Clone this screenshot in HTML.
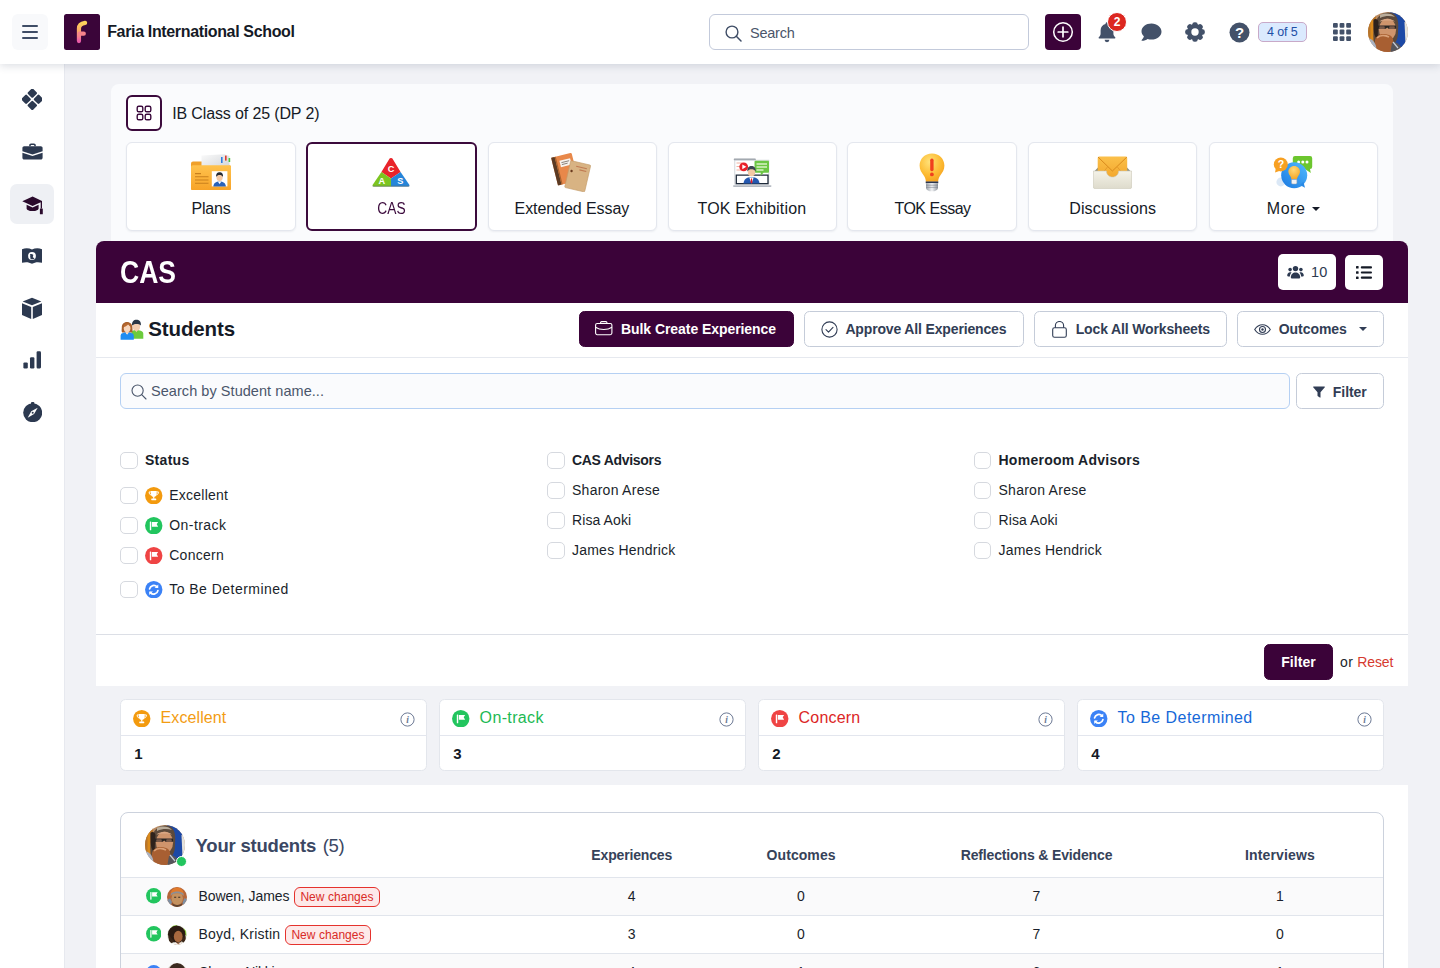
<!DOCTYPE html>
<html lang="en">
<head>
<meta charset="utf-8">
<title>CAS - IB Class of 25 (DP 2) - Faria International School</title>
<style>
*{box-sizing:border-box;margin:0;padding:0}
html,body{width:1440px;height:968px;overflow:hidden}
body{background:#f1f2f6;font-family:"Liberation Sans",Arial,sans-serif;color:#1a1f2b;font-size:14px;position:relative}
.abs{position:absolute}
svg{display:block}
.tx{position:absolute;white-space:nowrap}
#top{position:absolute;left:0;top:0;width:1440px;height:64px;background:#fff;box-shadow:0 2px 8px rgba(40,50,80,.16);z-index:20}
#burger{position:absolute;left:12px;top:14px;width:36px;height:36px;border-radius:6px;background:#f8f9fb}
#burger i{position:absolute;left:9.800px;width:16.400px;height:1.700px;background:#3f4d66;border-radius:1px}
#logo{position:absolute;left:64px;top:14px;width:36px;height:36px;border-radius:2.500px;background:#3a0539}
#gsearch{position:absolute;left:709px;top:14px;width:319.500px;height:35.500px;border:1px solid #c3cadb;border-radius:6px;background:#fff}
#plus{position:absolute;left:1045px;top:14px;width:36px;height:36px;border-radius:4px;background:#3b0339}
#badge2{position:absolute;left:1106.600px;top:11.700px;width:20.500px;height:20.500px;border-radius:50%;background:#dc2720;border:1.500px solid #fff}
#of5{position:absolute;left:1258px;top:22px;width:48.500px;height:20px;border:1px solid #c8a9c8;border-radius:5px;background:#dbeafe}
.avatar{border-radius:50%;overflow:hidden;position:absolute}
#side{position:absolute;left:0;top:64px;width:65px;height:904px;background:#fff;border-right:1px solid #e7e9ef;z-index:10}
#side .act{position:absolute;left:10px;top:120px;width:44px;height:40px;border-radius:7px;background:#eef0f4}
#side svg{position:absolute}
#panel{position:absolute;left:111px;top:84px;width:1282px;height:170px;background:#fafbfd;border-radius:8px}
#cicon{position:absolute;left:15px;top:11px;width:36px;height:36px;border:2px solid #3b0a3c;border-radius:6px;background:#fff}
.tab{position:absolute;top:58px;width:169.500px;height:88.500px;border:1px solid #e4e7ee;border-radius:6px;background:#fff;box-shadow:0 1px 2px rgba(40,50,80,.07)}
.tab.on{border:2px solid #3b0a3c;box-shadow:none}
.tab svg{position:absolute}
#banner{position:absolute;left:96px;top:241px;width:1312px;height:62px;background:#3b0339;border-radius:8px 8px 0 0}
.wbtn{position:absolute;top:13px;height:36px;border-radius:5px;background:#fff}
#sec2{position:absolute;left:96px;top:303px;width:1312px;height:383px;background:#fff}
#sec2 .hr1{position:absolute;left:0;top:54px;width:100%;height:1px;background:#e6e9ef}
#sec2 .hr2{position:absolute;left:0;top:330.500px;width:100%;height:1px;background:#dcdfe6}
.btn{position:absolute;top:8.300px;height:35.500px;border:1px solid #c5ccd9;border-radius:5.500px;background:#fff}
.btn.pri{background:#3b0339;border-color:#3b0339}
.btn svg{position:absolute}
#sinput{position:absolute;left:24px;top:70px;width:1170px;height:35.700px;border:1px solid #b5d0f3;border-radius:6px;background:#fafbfd}
.cb{position:absolute;width:17.500px;height:17px;border:1px solid #d6d9df;border-radius:5px;background:#fff}
.card{position:absolute;top:699px;width:306.500px;height:72px;border:1px solid #e3e6ec;border-radius:5.500px;background:#fff}
.card .ln{position:absolute;left:0;right:0;top:35px;height:1px;background:#e3e6ee}
#sec3{position:absolute;left:96px;top:785px;width:1312px;height:190px;background:#fff}
#tbl{position:absolute;left:24px;top:27px;width:1264px;height:200px;border:1px solid #ccd2dd;border-radius:8px;background:#fff;overflow:hidden}
.row{position:absolute;left:0;width:100%;height:38px;border-top:1px solid #e1e5ec}
.row.odd{background:#fafafb}
.tag{position:absolute;height:19.500px;width:86px;border:1px solid #e5322d;border-radius:6px;background:#fde9e9}
.av20{position:absolute;width:20.400px;height:20.400px;border-radius:50%;overflow:hidden}
</style>
</head>
<body>
<!-- top header -->
<div id="top">
<div id="burger"><i style="top:11.300px"></i><i style="top:17.300px"></i><i style="top:23.300px"></i></div>
<div id="logo"><svg width="36" height="36" viewBox="0 0 36 36"><defs><linearGradient id="lg" x1="0" y1="0" x2="0" y2="1"><stop offset="0" stop-color="#fdd25a"/><stop offset=".45" stop-color="#f9a868"/><stop offset=".8" stop-color="#f47a92"/><stop offset="1" stop-color="#e85aa8"/></linearGradient></defs><path d="M14.950 27.100V14.600C14.950 11.200 17.600 9.300 21.100 8.800" fill="none" stroke="url(#lg)" stroke-width="4.200" stroke-linecap="round"/><path d="M15.600 19.650H19.800" fill="none" stroke="#f6848c" stroke-width="4.200" stroke-linecap="round"/></svg></div>
<div class="tx" id="t1" style="left:107.20px;top:22.46px;font-size:16px;line-height:20px;color:#151a26;font-weight:700;letter-spacing:-0.349px;">Faria International School</div>
<div id="gsearch"><svg class="abs" style="left:14.500px;top:9.500px" width="17" height="17" viewBox="0 0 17 17"><circle cx="7" cy="7" r="5.900" fill="none" stroke="#3f4d66" stroke-width="1.400"/><path d="M11.300 11.300L16 16" stroke="#3f4d66" stroke-width="1.500" stroke-linecap="round"/></svg></div>
<div class="tx" id="t2" style="left:750.00px;top:22.98px;font-size:14.5px;line-height:20px;color:#4b566b;letter-spacing:-0.242px;">Search</div>
<div id="plus"><svg width="36" height="36" viewBox="0 0 36 36"><circle cx="18" cy="18" r="9.300" fill="none" stroke="#fff" stroke-width="1.500"/><path d="M18 13.200V22.800M13.200 18H22.800" stroke="#fff" stroke-width="1.700" stroke-linecap="round"/></svg></div>
<svg class="abs" style="left:1097px;top:21px" width="20" height="22" viewBox="0 0 20 22"><path d="M10 1.200c-.8 0-1.400.6-1.400 1.400v.5C5.600 3.800 3.600 6.300 3.600 9.300v3.300c0 1.200-.5 2.300-1.300 3.200l-.5.500c-.4.400-.1 1.300.6 1.300h15.200c.7 0 1-.9.600-1.300l-.5-.5c-.8-.9-1.300-2-1.300-3.200V9.300c0-3-2-5.500-5-6.200v-.5c0-.8-.6-1.400-1.400-1.400z" fill="#435169"/><path d="M7.600 18.800a2.400 2.400 0 0 0 4.800 0z" fill="#435169"/></svg>
<div id="badge2"></div>
<div class="tx" id="t3" style="left:1113.65px;top:12.04px;font-size:12px;line-height:20px;color:#fff;font-weight:700;letter-spacing:0.013px;">2</div>
<svg class="abs" style="left:1141px;top:23px" width="21" height="19" viewBox="0 0 21 19"><path d="M10.500.5C4.900.5.5 4 .5 8.300c0 1.900.9 3.700 2.400 5-.3 1.400-1.100 2.600-2.200 3.600-.3.300-.1.800.3.800 2.300 0 4.200-.8 5.600-1.800 1.200.4 2.500.6 3.900.6 5.600 0 10-3.500 10-7.800S16.100.5 10.500.5z" fill="#435169"/></svg>
<svg class="abs" style="left:1185px;top:22px" width="20" height="20" viewBox="0 0 20 20" fill="#435169"><circle cx="10" cy="10" r="7.900"/><rect x="7.300" y=".2" width="5.400" height="19.600" rx="2.300"/><rect x="7.300" y=".2" width="5.400" height="19.600" rx="2.300" transform="rotate(45 10 10)"/><rect x="7.300" y=".2" width="5.400" height="19.600" rx="2.300" transform="rotate(90 10 10)"/><rect x="7.300" y=".2" width="5.400" height="19.600" rx="2.300" transform="rotate(135 10 10)"/><circle cx="10" cy="10" r="3.700" fill="#fff"/></svg>
<svg class="abs" style="left:1229px;top:22px" width="21" height="21" viewBox="0 0 21 21"><circle cx="10.500" cy="10.500" r="10" fill="#435169"/><text x="10.500" y="15.900" text-anchor="middle" font-family="Liberation Sans,sans-serif" font-weight="700" font-size="15" fill="#fff">?</text></svg>
<div id="of5"></div>
<div class="tx" id="t4" style="left:1266.95px;top:21.97px;font-size:12.5px;line-height:20px;color:#1d4fa6;letter-spacing:-0.097px;">4 of 5</div>
<svg class="abs" style="left:1333px;top:23px" width="18" height="18" viewBox="0 0 18 18" fill="#435169"><rect x="0.0" y="0.0" width="4.800" height="4.800" rx="1"/><rect x="6.6" y="0.0" width="4.800" height="4.800" rx="1"/><rect x="13.2" y="0.0" width="4.800" height="4.800" rx="1"/><rect x="0.0" y="6.6" width="4.800" height="4.800" rx="1"/><rect x="6.6" y="6.6" width="4.800" height="4.800" rx="1"/><rect x="13.2" y="6.6" width="4.800" height="4.800" rx="1"/><rect x="0.0" y="13.2" width="4.800" height="4.800" rx="1"/><rect x="6.6" y="13.2" width="4.800" height="4.800" rx="1"/><rect x="13.2" y="13.2" width="4.800" height="4.800" rx="1"/></svg>
<div class="avatar" style="left:1368px;top:12px;width:40px;height:40px"><svg width="40" height="40" viewBox="0 0 40 40"><defs><filter id="fa" x="-5%" y="-5%" width="110%" height="110%"><feGaussianBlur stdDeviation=".7"/></filter></defs><rect width="40" height="40" fill="#b98a62"/><g filter="url(#fa)"><rect x="-2" y="-2" width="10" height="44" fill="#b8742a"/><rect x="2.500" y="8" width="2.500" height="20" fill="#d98a1e"/><path d="M22 -2H42V42H30L24 30z" fill="#1f48a6"/><path d="M36.500 10L42 8V34L37.500 32z" fill="#e4e2dc"/><path d="M6 30C4 14 8 1 20 .5 30 .5 31 9 30 20 30 30 26 34 19 34 12 34 7 34 6 30z" fill="#5c4a3a"/><path d="M12 3C16 .5 24 1 27 5 23 3.500 17 3.500 12 6z" fill="#b9ac9a"/><ellipse cx="19.500" cy="17.500" rx="8.600" ry="11" fill="#cf946c"/><path d="M11.500 9.500C14 6 24 6 27 9.500 24 8 15 8 11.500 9.500z" fill="#dba987"/><path d="M5.500 8C7 6 10 7 10.500 10 10 16 9.500 22 10 27 7 26 5 22 5.500 8z" fill="#2e211c"/><path d="M9.500 13.600H28V16.800H20.500L19.200 15.400 17.800 16.800H9.500z" fill="#2b2524"/><rect x="11.200" y="14.300" width="5.600" height="2.600" rx="1" fill="#7a5a48"/><rect x="21.200" y="14.300" width="5.600" height="2.600" rx="1" fill="#7a5a48"/><path d="M7 28C9 22 15 21 21 23 24 24 26 27 25 31 24 36 22 42 20 42H10C7 38 6 32 7 28z" fill="#a85f30"/><path d="M9 26C12 23 17 23 21 25" stroke="#d9a078" stroke-width="1.600" fill="none"/><path d="M-1 26C2 26 6 28 8 34L9 42H-1z" fill="#aab2c2"/><path d="M24 31C27 29 30 31 33 35L30 42H22z" fill="#55555c"/><path d="M25 30L30 36" stroke="#c8ccd6" stroke-width="1.200"/></g></svg></div>
</div>

<!-- sidebar -->
<div id="side">
<div class="act"></div>
<svg style="left:21.700px;top:25.300px" width="20.600" height="20.600" viewBox="0 0 22 22" fill="#2c3950"><rect x="7.100" y=".5" width="7.800" height="7.800" rx="1.300" transform="rotate(45 11 4.400)"/><rect x="7.100" y="13.700" width="7.800" height="7.800" rx="1.300" transform="rotate(45 11 17.600)"/><rect x=".5" y="7.100" width="7.800" height="7.800" rx="1.300" transform="rotate(45 4.400 11)"/><rect x="13.700" y="7.100" width="7.800" height="7.800" rx="1.300" transform="rotate(45 17.600 11)"/></svg>
<svg style="left:21.500px;top:78.800px" width="21" height="17" viewBox="0 0 21 17" fill="#2c3950"><path d="M7.200 3.200V2.200C7.200 1.200 8 .4 9 .4h3c1 0 1.800.8 1.800 1.800v1h-1.500v-.8c0-.3-.2-.5-.5-.5H9.200c-.3 0-.5.200-.5.500v.8z"/><path d="M2.200 3.200h16.600c1 0 1.800.8 1.800 1.800v3.200L10.500 11.400.4 8.200V5c0-1 .8-1.800 1.800-1.800z"/><path d="M.4 9.800l10.100 3.200 10.100-3.200v5c0 1-.8 1.800-1.800 1.800H2.200c-1 0-1.800-.8-1.800-1.800z"/></svg>
<svg style="left:21.500px;top:131.500px" width="22.500" height="19" viewBox="0 0 22.500 19" fill="#2a0a2c"><path d="M10.600.5.300 5.300l10.300 4.800 8.100-3.800v6.200h1.300V5.100z"/><path d="M4.600 8.700v3.700c0 1.400 2.700 2.700 6 2.700s6-1.300 6-2.700V8.700l-6 2.800z"/><rect x="17.900" y="12.600" width="2.900" height="5.600" rx=".5"/></svg>
<svg style="left:21px;top:183px" width="22" height="19" viewBox="0 0 22 19"><path d="M1 2.200C4.500.8 8 1 11 2.600 14 1 17.500.8 21 2.200v13.600c-3.500-1-7-.8-10 1-3-1.800-6.500-2-10-1z" fill="#2c3950"/><circle cx="11" cy="9" r="3.900" fill="#fff"/><path d="M9 7.200c1-.4 2.400-.3 3.200.6.300 1-.6 1.500-.3 2.500.4.800 1.500.3 1.500 1.200-1 1-2.800 1.200-4 .2.300-1-.5-1.600-.2-2.500.2-.8 0-1.300-.2-2z" fill="#2c3950"/></svg>
<svg style="left:21px;top:233px" width="22" height="23" viewBox="0 0 22 23" fill="#2c3950"><path d="M11 .8 20.400 4.500 11 8.300 1.600 4.500z"/><path d="M1 6.200l9.200 3.700v12L1 18.100z"/><path d="M21 6.200l-9.200 3.700v12l9.200-3.800z"/></svg>
<svg style="left:22.800px;top:287px" width="18.400" height="17.800" viewBox="0 0 20 19.400" fill="#2c3950"><rect x=".4" y="12.400" width="4.800" height="6.600" rx="1.300"/><rect x="7.600" y="6.800" width="4.800" height="12.200" rx="1.300"/><rect x="14.800" y=".4" width="4.800" height="18.600" rx="1.300"/></svg>
<svg style="left:22.500px;top:337.500px" width="19.400" height="20.400" viewBox="0 0 19.400 20.400"><rect x="8" y="0" width="3.400" height="3" rx="1" fill="#2c3950"/><circle cx="9.700" cy="10.700" r="9.500" fill="#2c3950"/><path d="M14.700 5.700 11.100 12.100 4.700 15.700 8.300 9.300z" fill="#fff"/><circle cx="9.700" cy="10.700" r="1" fill="#2c3950"/></svg>
</div>

<!-- class panel + tabs -->
<div id="panel">
<div id="cicon"><svg width="32" height="32" viewBox="0 0 32 32" fill="none" stroke="#3b0a3c" stroke-width="1.400"><rect x="9.200" y="9.200" width="5.600" height="5.600" rx="1.600"/><rect x="17.200" y="9.200" width="5.600" height="5.600" rx="1.600"/><rect x="9.200" y="17.200" width="5.600" height="5.600" rx="1.600"/><rect x="17.200" y="17.200" width="5.600" height="5.600" rx="1.600"/></svg></div>
<div class="tx" id="t5" style="left:61.20px;top:19.86px;font-size:16px;line-height:20px;color:#151a26;letter-spacing:-0.133px;">IB Class of 25 (DP 2)</div>
<div class="tab" style="left:15.4px;width:169.5px"></div>
<svg class="abs" style="left:79.8px;top:69.6px" width="40" height="36.4" viewBox="0 0 40 36.400"><defs><linearGradient id="pf" x1="0" y1="0" x2="0" y2="1"><stop offset="0" stop-color="#ffc24d"/><stop offset="1" stop-color="#f7a328"/></linearGradient><linearGradient id="pp" x1="0" y1="0" x2="1" y2="1"><stop offset="0" stop-color="#fafafa"/><stop offset="1" stop-color="#cfd2d6"/></linearGradient></defs>
<path d="M0 9.500Q0 7.500 2 7.500H14.500L17.500 11H38Q40 11 40 13V34Q40 36 38 36H2Q0 36 0 34Z" fill="#f0a02a"/>
<path d="M10.500 1.500L33 .3 38.500 2V16H10.500Z" fill="url(#pp)"/>
<rect x="30" y="3" width="1.600" height="6" fill="#2f7de0"/><rect x="34" y="1.600" width="1.600" height="5" fill="#e03a2f"/><rect x="37.600" y="4" width="1.600" height="4" fill="#4cc13a"/>
<path d="M0 13Q0 11.200 2 11.200H38Q40 11.200 40 13V34.400Q40 36.400 38 36.400H2Q0 36.400 0 34.400Z" fill="url(#pf)"/>
<path d="M4 19.600H10M4 22.800H17.500M4 26H17.500M4 29.200H17.500" stroke="#c9801c" stroke-width="1.100"/>
<rect x="20.800" y="17.200" width="15.600" height="15.200" fill="#fff"/>
<path d="M22.300 32.400c.4-3.600 2.600-5 6.300-5s5.900 1.400 6.300 5z" fill="#2a62b8"/><path d="M26.800 27.600l1.800 2.400 1.800-2.400z" fill="#fff"/>
<ellipse cx="28.600" cy="23.600" rx="3.100" ry="3.600" fill="#f3c9a6"/><path d="M25.200 23c-.4-3.400 1.400-4.800 3.400-4.800s3.800 1.400 3.400 4.800c-.8-1.600-2-2-3.400-2s-2.600.4-3.400 2z" fill="#262b33"/></svg>
<div class="tx" id="t6" style="left:80.50px;top:114.71px;font-size:16px;line-height:20px;color:#151a26;letter-spacing:-0.206px;">Plans</div>
<div class="tab on" style="left:195.0px;width:171px"></div>
<svg class="abs" style="left:261.2px;top:73.0px" width="38" height="30" viewBox="0 0 38 30"><path d="M19 1.200Q19.800.6 20.400 1.600L28.600 15 19 21.600 9.400 15 17.600 1.600Q18.200.6 19 1.200z" fill="#e8232a"/>
<path d="M9.400 15L19 21.600V29.400H2Q-.2 29.400.9 27.500z" fill="#7cc520"/>
<path d="M28.600 15L19 21.600V29.400H36Q38.200 29.400 37.100 27.500z" fill="#2585d9"/>
<path d="M.6 28.400Q0 29.900 2 29.900H36Q38 29.900 37.400 28.400z" fill="#5e6a6e" opacity=".45"/>
<text x="19" y="14.600" text-anchor="middle" font-family="Liberation Sans,sans-serif" font-weight="700" font-size="9.200" fill="#fff">C</text>
<text x="9.700" y="27.400" text-anchor="middle" font-family="Liberation Sans,sans-serif" font-weight="700" font-size="9.200" fill="#fff">A</text>
<text x="28.300" y="27.400" text-anchor="middle" font-family="Liberation Sans,sans-serif" font-weight="700" font-size="9.200" fill="#fff">S</text></svg>
<div class="tx" id="t7" style="left:263.94px;top:114.71px;font-size:16px;line-height:20px;color:#3b0a3c;transform:scaleX(0.8600);transform-origin:center center;">CAS</div>
<div class="tab" style="left:376.5px;width:169.5px"></div>
<svg class="abs" style="left:440.0px;top:68.0px" width="40" height="40" viewBox="0 0 40 40"><g transform="rotate(-14 13 17)"><rect x="3.200" y="3" width="21" height="28.500" rx="1.200" fill="#e8884a"/><rect x="3.200" y="3" width="3.600" height="28.500" fill="#5a3a24"/><rect x="6.800" y="3" width="1.200" height="28.500" fill="#a8622e"/><rect x="10.500" y="8" width="11" height="6.500" fill="#f7f3ee"/><path d="M12 10.200h8M12 12.200h6" stroke="#7a7068" stroke-width=".8"/></g>
<g transform="rotate(13 26.500 24)"><rect x="16.500" y="10.500" width="20.500" height="27.500" rx="1" fill="#d8b383"/><rect x="16.500" y="10.500" width="20.500" height="27.500" rx="1" fill="none" stroke="#c39a68" stroke-width=".6"/><path d="M23 14.800h11M27 17.600h7" stroke="#c07a52" stroke-width="1.100"/><circle cx="19.600" cy="20.500" r="1.200" fill="#6a3a1e"/></g></svg>
<div class="tx" id="t8" style="left:403.52px;top:114.71px;font-size:16px;line-height:20px;color:#151a26;letter-spacing:-0.062px;">Extended Essay</div>
<div class="tab" style="left:556.5px;width:169.5px"></div>
<svg class="abs" style="left:622.0px;top:73.5px" width="38.5" height="29.5" viewBox="0 0 38.500 29.500"><rect x=".8" y=".6" width="22" height="1.800" rx=".6" fill="#9aa0a8"/>
<rect x="1.800" y="2.200" width="34" height="24" fill="#fff" stroke="#c9cdd3" stroke-width=".8"/>
<path d="M3.500 5h6M3.500 8.500h4M3.500 12h5" stroke="#f1b0a0" stroke-width="1"/>
<path d="M3.300 17.200H35V25.600H3.300Z" fill="#fff" stroke="#1f2a3a" stroke-width="1.300"/>
<circle cx="10.700" cy="8.800" r="4.400" fill="#e8202a"/><path d="M9.300 6.400v4.800l4-2.400z" fill="#fff"/>
<path d="M21.500 3.800Q21.500 2.800 22.500 2.800H35Q36 2.800 36 3.800V13.800Q36 14.800 35 14.800H30.500L27.500 18 27.800 14.800H22.500Q21.500 14.800 21.500 13.800Z" fill="#6cc644"/>
<path d="M23.500 6h10.500M23.500 9h10.500M23.500 12h7" stroke="#d8f2c4" stroke-width="1.300"/>
<path d="M10.500 25.600c.4-4.600 3-6.400 8-6.400s7.600 1.800 8 6.400z" fill="#2458b0"/><path d="M16.300 19.400l2.200 6.200 2.200-6.200z" fill="#fff"/><path d="M18 20.400h1l.5 4-1 1.200-1-1.200z" fill="#e0202a"/>
<ellipse cx="18.500" cy="14" rx="3.700" ry="4.300" fill="#f3c9a6"/><path d="M14.400 13.600c-.5-4 1.700-5.600 4.100-5.600s4.600 1.600 4.100 5.600c-1-1.800-2.400-2.400-4.100-2.400s-3.100.6-4.100 2.400z" fill="#3a4452"/>
<rect x="0" y="27.200" width="38.500" height="1.700" rx=".8" fill="#b5bac2"/></svg>
<div class="tx" id="t9" style="left:586.52px;top:114.71px;font-size:16px;line-height:20px;color:#151a26;letter-spacing:0.166px;">TOK Exhibition</div>
<div class="tab" style="left:736.3px;width:169.5px"></div>
<svg class="abs" style="left:808.2px;top:68.6px" width="26" height="39" viewBox="0 0 26 39"><defs><radialGradient id="bg1" cx=".4" cy=".3" r=".8"><stop offset="0" stop-color="#ffe27a"/><stop offset=".55" stop-color="#fdbd35"/><stop offset="1" stop-color="#f39a18"/></radialGradient><linearGradient id="mt" x1="0" y1="0" x2="1" y2="0"><stop offset="0" stop-color="#9aa0a8"/><stop offset=".5" stop-color="#f2f3f5"/><stop offset="1" stop-color="#8e949c"/></linearGradient></defs>
<path d="M13 .5C5.800 .5 .6 6 .6 12.600c0 4.200 2 7 3.800 9.400 1.500 2 2.300 4 2.500 6.800H19.100c.2-2.800 1-4.800 2.500-6.800 1.800-2.400 3.800-5.200 3.800-9.400C25.400 6 20.200.5 13 .5z" fill="url(#bg1)"/>
<rect x="6.700" y="28.500" width="12.600" height="1.700" fill="#2a3550"/>
<path d="M7 30.200H19V35Q19 36.600 17.400 37.200L15.500 38.300H10.500L8.600 37.200Q7 36.600 7 35Z" fill="url(#mt)"/>
<path d="M7 32.200H19M7 34.400H19" stroke="#7f858e" stroke-width=".6"/>
<rect x="11.200" y="5.600" width="3.400" height="12.600" rx="1.600" fill="#f0401e"/><circle cx="12.900" cy="21.400" r="1.900" fill="#f0401e"/></svg>
<div class="tx" id="t10" style="left:783.45px;top:114.71px;font-size:16px;line-height:20px;color:#151a26;letter-spacing:-0.503px;">TOK Essay</div>
<div class="tab" style="left:916.6px;width:169.5px"></div>
<svg class="abs" style="left:982.4px;top:71.6px" width="39" height="33" viewBox="0 0 39 33"><defs><linearGradient id="ev" x1="0" y1="0" x2="0" y2="1"><stop offset="0" stop-color="#fbc04a"/><stop offset="1" stop-color="#f2a52a"/></linearGradient><linearGradient id="tr" x1="0" y1="0" x2="0" y2="1"><stop offset="0" stop-color="#f4f2e8"/><stop offset="1" stop-color="#dedbcc"/></linearGradient></defs>
<path d="M1.200 15.500L5 11.500H34L37.800 15.500V20H1.200Z" fill="#8b8f86"/>
<rect x="4.700" y=".6" width="29.500" height="23" rx="1.500" fill="url(#ev)"/>
<path d="M5 1L19.400 15 33.900 1" fill="none" stroke="#d98a1c" stroke-width="1"/><path d="M5 23L14.500 11M33.900 23L24.400 11" stroke="#e0952a" stroke-width=".8"/>
<path d="M.4 15H13.400C13.400 18.400 16 21 19.500 21S25.600 18.400 25.600 15H38.600V31Q38.600 32.600 37 32.600H2Q.4 32.600 .4 31Z" fill="url(#tr)" stroke="#c9c6b6" stroke-width=".6"/></svg>
<div class="tx" id="t11" style="left:958.20px;top:114.71px;font-size:16px;line-height:20px;color:#151a26;letter-spacing:0.149px;">Discussions</div>
<div class="tab" style="left:1097.5px;width:169.5px"></div>
<svg class="abs" style="left:1162.0px;top:71.0px" width="40" height="34" viewBox="0 0 40 34"><defs><linearGradient id="mb" x1="1" y1="0" x2="0" y2="1"><stop offset="0" stop-color="#52bbff"/><stop offset="1" stop-color="#1a78e0"/></linearGradient><radialGradient id="ml" cx=".45" cy=".3" r=".8"><stop offset="0" stop-color="#ffd878"/><stop offset="1" stop-color="#f5a21c"/></radialGradient></defs>
<circle cx="7.800" cy="27" r="4.400" fill="#dbe8f6"/>
<path d="M22 1H37Q39.200 1 39.200 3.200V11.800Q39.200 14 37 14L37.800 18 32 14H22Q19.800 14 19.800 11.800V3.200Q19.800 1 22 1z" fill="#6cc62e"/>
<circle cx="25.600" cy="7" r="1.500" fill="#fff"/><circle cx="29.800" cy="7" r="1.500" fill="#fff"/><circle cx="34" cy="7" r="1.500" fill="#fff"/>
<circle cx="21.200" cy="20.200" r="13" fill="url(#mb)"/><path d="M27 30l5 2.800-1.600-6z" fill="#2a8ae6"/>
<circle cx="7.800" cy="9.400" r="7" fill="#f7a022"/><path d="M2.800 13.500L2 17.400 7 15.800z" fill="#f7a022"/>
<text x="7.900" y="13.300" text-anchor="middle" font-family="Liberation Sans,sans-serif" font-weight="700" font-size="10.500" fill="#fff">?</text>
<path d="M21.200 11c-3.300 0-5.800 2.500-5.800 5.600 0 1.900.9 3.200 1.800 4.300.7.900 1.100 1.800 1.200 3h5.600c.1-1.200.5-2.100 1.200-3 .9-1.100 1.800-2.400 1.800-4.300 0-3.100-2.500-5.600-5.800-5.600z" fill="url(#ml)"/>
<path d="M18.500 24.400h5.400v3.400q0 1.200-1.200 1.200h-3q-1.200 0-1.200-1.200z" fill="#f1f2f4" stroke="#9aa0a8" stroke-width=".5"/></svg>
<div class="tx" id="t12" style="left:1155.80px;top:114.71px;font-size:16px;line-height:20px;color:#151a26;letter-spacing:0.537px;">More</div>
<i class="abs" style="left:1200.800px;top:123px;width:0;height:0;border-left:4px solid transparent;border-right:4px solid transparent;border-top:4.500px solid #151a26"></i>
</div>

<!-- CAS banner -->
<div id="banner">
<div class="tx" id="t13" style="left:23.60px;top:13.39px;font-size:31.5px;line-height:36px;color:#fff;font-weight:700;transform:scaleX(0.8419);transform-origin:left center;">CAS</div>
<div class="wbtn" style="left:1182px;width:58px"><svg class="abs" style="left:9px;top:11px" width="17" height="14" viewBox="0 0 17 14" fill="#2c3950"><circle cx="8.500" cy="3.600" r="2.700"/><path d="M3.800 12.600c0-3 2-5 4.700-5s4.700 2 4.700 5c0 .5-.3.800-.8.800H4.600c-.5 0-.8-.3-.8-.8z"/><circle cx="3.100" cy="4.600" r="1.800"/><circle cx="13.900" cy="4.600" r="1.800"/><path d="M.2 10.600c0-2 1.200-3.400 2.900-3.400.6 0 1.100.2 1.500.4-1 1-1.600 2.300-1.700 3.800H1c-.5 0-.8-.3-.8-.8zM16.800 10.600c0-2-1.200-3.400-2.900-3.400-.6 0-1.100.2-1.500.4 1 1 1.600 2.300 1.700 3.800H16c.5 0 .8-.3.800-.8z"/></svg></div>
<div class="tx" id="t14" style="left:1215.00px;top:21.28px;font-size:14.5px;line-height:20px;color:#2c3950;letter-spacing:0.080px;">10</div>
<div class="wbtn" style="left:1249px;width:38.300px;top:14px;height:34.500px"><svg class="abs" style="left:11px;top:10px" width="16" height="15" viewBox="0 0 16 15" fill="#151a26"><rect x="0" y="1" width="2.600" height="2.600" rx=".6"/><rect x="4.800" y="1.200" width="11.200" height="2.200" rx="1"/><rect x="0" y="6.200" width="2.600" height="2.600" rx=".6"/><rect x="4.800" y="6.400" width="11.200" height="2.200" rx="1"/><rect x="0" y="11.400" width="2.600" height="2.600" rx=".6"/><rect x="4.800" y="11.600" width="11.200" height="2.200" rx="1"/></svg></div>
</div>

<!-- students + filter -->
<div id="sec2">
<svg class="abs" style="left:24px;top:16px" width="24" height="21" viewBox="0 0 24 21"><path d="M11.500 19.800V13.600Q11.500 11.600 14 11.200L16.400 10.600 18.800 11.200Q23.300 11.800 23.300 14.600V19.800Z" fill="#6ccb3c"/><path d="M14.800 10.800l1.600 2.400 1.600-2.400z" fill="#f6c3b0"/><ellipse cx="16.400" cy="7.400" rx="3.700" ry="4.300" fill="#f3cdb0"/><path d="M12.100 6.600C11.600 2.600 13.800.8 16.400.8s4.900 1.600 4.500 5.600c-1.200-1.300-2.700-1.500-4.400-1.500s-3.200.4-4.400 1.700z" fill="#2a3646"/><path d="M7 2.900c-3.200 0-5.200 2.400-5.200 5.400 0 2.400-.6 4 .4 5.300h9.800c1-1.300.4-2.900.4-5.300 0-3-2.200-5.400-5.400-5.400z" fill="#a9602c"/><ellipse cx="7.100" cy="9.200" rx="3.300" ry="3.900" fill="#f8d6bc"/><path d="M3.800 8c1.600-.4 3.400-1.400 4.400-2.800.6 1.200 1.400 2 2.300 2.600C10.300 5.400 9 4.200 7 4.200S3.800 5.600 3.800 8z" fill="#b8692f"/><path d="M.6 20.800V16.600Q.6 14.300 3 13.900L5.200 13.300 7.100 15.600 9 13.300 11.300 13.900Q13.800 14.300 13.800 16.600V20.800Z" fill="#1f8df2"/><path d="M5.400 13.200l1.700 2.300 1.700-2.300z" fill="#f8d6bc"/></svg>
<div class="tx" id="t15" style="left:52.30px;top:13.20px;font-size:20.5px;line-height:26px;color:#151a26;font-weight:700;letter-spacing:-0.138px;">Students</div>
<div class="btn pri" style="left:483.0px;width:214.6px"><svg style="left:15.200px;top:9.200px" width="17.500" height="14.500" viewBox="0 0 17.500 14.500" fill="none" stroke="#fff" stroke-width="1.100"><rect x=".6" y="2.500" width="16.300" height="11.200" rx="1.600"/><path d="M5.600 2.500V1.600c0-.6.400-1 1-1h4.300c.6 0 1 .4 1 1v.9M.6 6.200c2.400 1.700 5 2.300 8.150 2.300s5.750-.6 8.150-2.300"/></svg></div>
<div class="tx" id="t16" style="left:525.00px;top:15.95px;font-size:14px;line-height:20px;color:#fff;font-weight:700;letter-spacing:-0.064px;">Bulk Create Experience</div>
<div class="btn" style="left:708.2px;width:219.5px"><svg style="left:15.600px;top:9.200px" width="17" height="17" viewBox="0 0 17 17" fill="none" stroke="#313d55" stroke-width="1.100"><circle cx="8.500" cy="8.500" r="7.600"/><path d="M5 8.700l2.500 2.500L12 6.400" stroke-linecap="round" stroke-linejoin="round"/></svg></div>
<div class="tx" id="t17" style="left:749.40px;top:15.95px;font-size:14px;line-height:20px;color:#313d55;font-weight:700;letter-spacing:-0.149px;">Approve All Experiences</div>
<div class="btn" style="left:938.4px;width:192.2px"><svg style="left:16.300px;top:8.500px" width="15" height="17" viewBox="0 0 15 17" fill="none" stroke="#313d55" stroke-width="1.100"><rect x=".7" y="6.800" width="13.600" height="9.400" rx="1.800"/><path d="M3.400 6.800V4.600a4.100 4.100 0 0 1 8.200 0v2.200"/></svg></div>
<div class="tx" id="t18" style="left:979.70px;top:15.95px;font-size:14px;line-height:20px;color:#313d55;font-weight:700;letter-spacing:-0.144px;">Lock All Worksheets</div>
<div class="btn" style="left:1141.3px;width:146.5px"><svg style="left:15.700px;top:12px" width="17" height="11" viewBox="0 0 17 11" fill="none" stroke="#313d55" stroke-width="1.100"><path d="M.7 5.500C2.600 2.500 5.300.7 8.500.7s5.900 1.800 7.800 4.800c-1.900 3-4.600 4.800-7.800 4.800S2.600 8.500.7 5.500z"/><circle cx="8.500" cy="5.500" r="3"/><circle cx="8.500" cy="5.500" r="1.200" fill="#313d55" stroke="none"/></svg><i style="position:absolute;left:121px;top:15px;width:0;height:0;border-left:4px solid transparent;border-right:4px solid transparent;border-top:4.500px solid #313d55"></i></div>
<div class="tx" id="t19" style="left:1182.70px;top:15.95px;font-size:14px;line-height:20px;color:#313d55;font-weight:700;letter-spacing:-0.046px;">Outcomes</div>
<div class="hr1"></div>
<div id="sinput"><svg class="abs" style="left:10px;top:10px" width="16" height="16" viewBox="0 0 16 16" fill="none" stroke="#4a566b" stroke-width="1.100"><circle cx="6.600" cy="6.600" r="5.600"/><path d="M10.700 10.700l4.300 4.300" stroke-linecap="round"/></svg></div>
<div class="tx" id="t20" style="left:55.00px;top:77.58px;font-size:14.5px;line-height:20px;color:#4a566b;letter-spacing:0.052px;">Search by Student name...</div>
<div class="btn" style="left:1200px;top:70px;width:87.800px"><svg style="left:16px;top:12px" width="12" height="12" viewBox="0 0 12 12" fill="#313d55"><path d="M.6.400h10.800c.5 0 .7.500.4.900L7.500 6.300v4.900c0 .4-.4.600-.7.400L4.900 10.200a.8.800 0 0 1-.4-.7V6.300L.2 1.300C-.1.900.1.400.6.400z"/></svg></div>
<div class="tx" id="t21" style="left:1236.80px;top:78.55px;font-size:14px;line-height:20px;color:#313d55;font-weight:700;letter-spacing:-0.056px;">Filter</div>
<div class="cb" style="left:24px;top:149px"></div>
<div class="tx" id="t22" style="left:49.00px;top:147.40px;font-size:14px;line-height:20px;color:#1a1f2b;font-weight:700;letter-spacing:0.284px;">Status</div>
<div class="cb" style="left:24px;top:184px"></div>
<svg class="abs" style="left:49px;top:183.8px" width="17.5" height="17.5" viewBox="0 0 16 16"><circle cx="8" cy="8" r="7.950" fill="#f39a0e"/><path d="M5.300 3.700h5.400v2.500c0 1.700-1.100 3-2.700 3s-2.700-1.300-2.700-3z" fill="#fff"/><path d="M5.300 4.500H3.800c0 1.700.6 2.600 1.800 2.800M10.700 4.500h1.500c0 1.700-.6 2.600-1.800 2.800" fill="none" stroke="#fff" stroke-width=".9"/><rect x="7.450" y="9" width="1.100" height="1.700" fill="#fff"/><rect x="5.700" y="10.600" width="4.600" height="1.400" rx=".4" fill="#fff"/></svg>
<div class="tx" id="t23" style="left:73.25px;top:182.40px;font-size:14px;line-height:20px;color:#1a1f2b;letter-spacing:0.243px;">Excellent</div>
<div class="cb" style="left:24px;top:214px"></div>
<svg class="abs" style="left:49px;top:213.8px" width="17.5" height="17.5" viewBox="0 0 16 16"><circle cx="8" cy="8" r="7.950" fill="#22c55e"/><rect x="4.400" y="4" width="1.300" height="8.200" rx=".5" fill="#fff"/><path d="M6.300 4.500h5.700l-1.300 2.200 1.300 2.200H6.300z" fill="#fff"/></svg>
<div class="tx" id="t24" style="left:73.25px;top:212.40px;font-size:14px;line-height:20px;color:#1a1f2b;letter-spacing:0.445px;">On-track</div>
<div class="cb" style="left:24px;top:244px"></div>
<svg class="abs" style="left:49px;top:243.8px" width="17.5" height="17.5" viewBox="0 0 16 16"><circle cx="8" cy="8" r="7.950" fill="#ef4444"/><rect x="4.400" y="4" width="1.300" height="8.200" rx=".5" fill="#fff"/><path d="M6.300 4.500h5.700l-1.300 2.200 1.300 2.200H6.300z" fill="#fff"/></svg>
<div class="tx" id="t25" style="left:73.25px;top:242.40px;font-size:14px;line-height:20px;color:#1a1f2b;letter-spacing:0.261px;">Concern</div>
<div class="cb" style="left:24px;top:278px"></div>
<svg class="abs" style="left:49px;top:277.8px" width="17.5" height="17.5" viewBox="0 0 16 16"><circle cx="8" cy="8" r="7.950" fill="#3b82f6"/><path d="M4.200 7.200A3.900 3.900 0 0 1 11 5.400" fill="none" stroke="#fff" stroke-width="1.600" stroke-linecap="round"/><path d="M12.100 3.200v3.300H8.800z" fill="#fff"/><path d="M11.800 8.800A3.900 3.900 0 0 1 5 10.600" fill="none" stroke="#fff" stroke-width="1.600" stroke-linecap="round"/><path d="M3.900 12.800V9.500h3.300z" fill="#fff"/></svg>
<div class="tx" id="t26" style="left:73.25px;top:276.05px;font-size:14px;line-height:20px;color:#1a1f2b;letter-spacing:0.465px;">To Be Determined</div>
<div class="cb" style="left:451px;top:149px"></div>
<div class="tx" id="t27" style="left:476.00px;top:147.25px;font-size:14px;line-height:20px;color:#1a1f2b;font-weight:700;letter-spacing:-0.299px;">CAS Advisors</div>
<div class="cb" style="left:451px;top:179px"></div>
<div class="tx" id="t28" style="left:476.00px;top:177.25px;font-size:14px;line-height:20px;color:#1a1f2b;letter-spacing:0.263px;">Sharon Arese</div>
<div class="cb" style="left:451px;top:209px"></div>
<div class="tx" id="t29" style="left:476.00px;top:207.25px;font-size:14px;line-height:20px;color:#1a1f2b;letter-spacing:0.099px;">Risa Aoki</div>
<div class="cb" style="left:451px;top:239px"></div>
<div class="tx" id="t30" style="left:476.00px;top:237.25px;font-size:14px;line-height:20px;color:#1a1f2b;letter-spacing:0.223px;">James Hendrick</div>
<div class="cb" style="left:877.5px;top:149px"></div>
<div class="tx" id="t31" style="left:902.50px;top:147.25px;font-size:14px;line-height:20px;color:#1a1f2b;font-weight:700;letter-spacing:0.260px;">Homeroom Advisors</div>
<div class="cb" style="left:877.5px;top:179px"></div>
<div class="tx" id="t32" style="left:902.50px;top:177.25px;font-size:14px;line-height:20px;color:#1a1f2b;letter-spacing:0.263px;">Sharon Arese</div>
<div class="cb" style="left:877.5px;top:209px"></div>
<div class="tx" id="t33" style="left:902.50px;top:207.25px;font-size:14px;line-height:20px;color:#1a1f2b;letter-spacing:0.099px;">Risa Aoki</div>
<div class="cb" style="left:877.5px;top:239px"></div>
<div class="tx" id="t34" style="left:902.50px;top:237.25px;font-size:14px;line-height:20px;color:#1a1f2b;letter-spacing:0.223px;">James Hendrick</div>
<div class="hr2"></div>
<div class="btn pri" style="left:1168px;top:341.4px;width:69px"></div>
<div class="tx" id="t35" style="left:1185.25px;top:349.15px;font-size:14px;line-height:20px;color:#fff;font-weight:700;letter-spacing:0.044px;">Filter</div>
<div class="tx" id="t36" style="left:1244.00px;top:349.15px;font-size:14px;line-height:20px;color:#1a1f2b;letter-spacing:0.423px;">or</div>
<div class="tx" id="t37" style="left:1261.30px;top:349.15px;font-size:14px;line-height:20px;color:#d63a2f;letter-spacing:-0.136px;">Reset</div>
</div>

<!-- status cards -->
<div class="card" style="left:120px"><svg class="abs" style="left:12.3px;top:9.5px" width="17.5" height="17.5" viewBox="0 0 16 16"><circle cx="8" cy="8" r="7.950" fill="#f39a0e"/><path d="M5.300 3.700h5.400v2.500c0 1.700-1.100 3-2.700 3s-2.700-1.300-2.700-3z" fill="#fff"/><path d="M5.300 4.500H3.800c0 1.700.6 2.600 1.800 2.800M10.700 4.500h1.500c0 1.700-.6 2.600-1.800 2.800" fill="none" stroke="#fff" stroke-width=".9"/><rect x="7.450" y="9" width="1.100" height="1.700" fill="#fff"/><rect x="5.700" y="10.600" width="4.600" height="1.400" rx=".4" fill="#fff"/></svg><svg class="abs" style="left:278.700px;top:11.500px" width="15" height="15" viewBox="0 0 15 15"><circle cx="7.500" cy="7.500" r="6.600" fill="none" stroke="#6c7994" stroke-width="1"/><text x="7.600" y="10.900" text-anchor="middle" font-family="Liberation Serif,serif" font-style="italic" font-weight="700" font-size="9.500" fill="#6c7994">i</text></svg><div class="ln"></div><div class="tx" id="t38" style="left:39.60px;top:7.71px;font-size:16px;line-height:20px;color:#f39c12;letter-spacing:0.092px;">Excellent</div><div class="tx" id="t39" style="left:13.20px;top:43.55px;font-size:15px;line-height:20px;color:#151a26;font-weight:700;letter-spacing:-0.044px;">1</div></div>
<div class="card" style="left:439px"><svg class="abs" style="left:12.3px;top:9.5px" width="17.5" height="17.5" viewBox="0 0 16 16"><circle cx="8" cy="8" r="7.950" fill="#22c55e"/><rect x="4.400" y="4" width="1.300" height="8.200" rx=".5" fill="#fff"/><path d="M6.300 4.500h5.700l-1.300 2.200 1.300 2.200H6.300z" fill="#fff"/></svg><svg class="abs" style="left:278.700px;top:11.500px" width="15" height="15" viewBox="0 0 15 15"><circle cx="7.500" cy="7.500" r="6.600" fill="none" stroke="#6c7994" stroke-width="1"/><text x="7.600" y="10.900" text-anchor="middle" font-family="Liberation Serif,serif" font-style="italic" font-weight="700" font-size="9.500" fill="#6c7994">i</text></svg><div class="ln"></div><div class="tx" id="t40" style="left:39.60px;top:7.71px;font-size:16px;line-height:20px;color:#1db954;letter-spacing:0.357px;">On-track</div><div class="tx" id="t41" style="left:13.20px;top:43.55px;font-size:15px;line-height:20px;color:#151a26;font-weight:700;letter-spacing:-0.044px;">3</div></div>
<div class="card" style="left:758px"><svg class="abs" style="left:12.3px;top:9.5px" width="17.5" height="17.5" viewBox="0 0 16 16"><circle cx="8" cy="8" r="7.950" fill="#ef4444"/><rect x="4.400" y="4" width="1.300" height="8.200" rx=".5" fill="#fff"/><path d="M6.300 4.500h5.700l-1.300 2.200 1.300 2.200H6.300z" fill="#fff"/></svg><svg class="abs" style="left:278.700px;top:11.500px" width="15" height="15" viewBox="0 0 15 15"><circle cx="7.500" cy="7.500" r="6.600" fill="none" stroke="#6c7994" stroke-width="1"/><text x="7.600" y="10.900" text-anchor="middle" font-family="Liberation Serif,serif" font-style="italic" font-weight="700" font-size="9.500" fill="#6c7994">i</text></svg><div class="ln"></div><div class="tx" id="t42" style="left:39.60px;top:7.71px;font-size:16px;line-height:20px;color:#dc2626;letter-spacing:0.188px;">Concern</div><div class="tx" id="t43" style="left:13.20px;top:43.55px;font-size:15px;line-height:20px;color:#151a26;font-weight:700;letter-spacing:-0.044px;">2</div></div>
<div class="card" style="left:1077px"><svg class="abs" style="left:12.3px;top:9.5px" width="17.5" height="17.5" viewBox="0 0 16 16"><circle cx="8" cy="8" r="7.950" fill="#3b82f6"/><path d="M4.200 7.200A3.900 3.900 0 0 1 11 5.400" fill="none" stroke="#fff" stroke-width="1.600" stroke-linecap="round"/><path d="M12.100 3.200v3.300H8.800z" fill="#fff"/><path d="M11.800 8.800A3.900 3.900 0 0 1 5 10.600" fill="none" stroke="#fff" stroke-width="1.600" stroke-linecap="round"/><path d="M3.900 12.800V9.500h3.300z" fill="#fff"/></svg><svg class="abs" style="left:278.700px;top:11.500px" width="15" height="15" viewBox="0 0 15 15"><circle cx="7.500" cy="7.500" r="6.600" fill="none" stroke="#6c7994" stroke-width="1"/><text x="7.600" y="10.900" text-anchor="middle" font-family="Liberation Serif,serif" font-style="italic" font-weight="700" font-size="9.500" fill="#6c7994">i</text></svg><div class="ln"></div><div class="tx" id="t44" style="left:39.60px;top:7.71px;font-size:16px;line-height:20px;color:#1668d8;letter-spacing:0.440px;">To Be Determined</div><div class="tx" id="t45" style="left:13.20px;top:43.55px;font-size:15px;line-height:20px;color:#151a26;font-weight:700;letter-spacing:-0.044px;">4</div></div>

<!-- students table -->
<div id="sec3"><div id="tbl">
<div class="avatar" style="left:24px;top:11.7px;width:40px;height:40px"><svg width="40" height="40" viewBox="0 0 40 40"><defs><filter id="fb" x="-5%" y="-5%" width="110%" height="110%"><feGaussianBlur stdDeviation=".7"/></filter></defs><rect width="40" height="40" fill="#b98a62"/><g filter="url(#fb)"><rect x="-2" y="-2" width="10" height="44" fill="#b8742a"/><rect x="2.500" y="8" width="2.500" height="20" fill="#d98a1e"/><path d="M22 -2H42V42H30L24 30z" fill="#1f48a6"/><path d="M36.500 10L42 8V34L37.500 32z" fill="#e4e2dc"/><path d="M6 30C4 14 8 1 20 .5 30 .5 31 9 30 20 30 30 26 34 19 34 12 34 7 34 6 30z" fill="#5c4a3a"/><path d="M12 3C16 .5 24 1 27 5 23 3.500 17 3.500 12 6z" fill="#b9ac9a"/><ellipse cx="19.500" cy="17.500" rx="8.600" ry="11" fill="#cf946c"/><path d="M11.500 9.500C14 6 24 6 27 9.500 24 8 15 8 11.500 9.500z" fill="#dba987"/><path d="M5.500 8C7 6 10 7 10.500 10 10 16 9.500 22 10 27 7 26 5 22 5.500 8z" fill="#2e211c"/><path d="M9.500 13.600H28V16.800H20.500L19.200 15.400 17.800 16.800H9.500z" fill="#2b2524"/><rect x="11.200" y="14.300" width="5.600" height="2.600" rx="1" fill="#7a5a48"/><rect x="21.200" y="14.300" width="5.600" height="2.600" rx="1" fill="#7a5a48"/><path d="M7 28C9 22 15 21 21 23 24 24 26 27 25 31 24 36 22 42 20 42H10C7 38 6 32 7 28z" fill="#a85f30"/><path d="M9 26C12 23 17 23 21 25" stroke="#d9a078" stroke-width="1.600" fill="none"/><path d="M-1 26C2 26 6 28 8 34L9 42H-1z" fill="#aab2c2"/><path d="M24 31C27 29 30 31 33 35L30 42H22z" fill="#55555c"/><path d="M25 30L30 36" stroke="#c8ccd6" stroke-width="1.200"/></g></svg></div>
<div class="abs" style="left:54.5px;top:42.5px;width:11px;height:11px;border-radius:50%;background:#22c55e;border:1px solid #fff"></div>
<div class="tx" id="t46" style="left:74.50px;top:19.59px;font-size:18.5px;line-height:26px;color:#3b4763;font-weight:700;letter-spacing:-0.192px;">Your students</div>
<div class="tx" id="t47" style="left:201.75px;top:19.59px;font-size:18.5px;line-height:26px;color:#3b4763;letter-spacing:-0.292px;">(5)</div>
<div class="tx" id="t48" style="left:470.35px;top:32.15px;font-size:14px;line-height:20px;color:#364259;font-weight:700;letter-spacing:-0.164px;">Experiences</div>
<div class="tx" id="t49" style="left:645.60px;top:32.15px;font-size:14px;line-height:20px;color:#364259;font-weight:700;letter-spacing:0.066px;">Outcomes</div>
<div class="tx" id="t50" style="left:839.70px;top:32.15px;font-size:14px;line-height:20px;color:#364259;font-weight:700;letter-spacing:-0.147px;">Reflections &amp; Evidence</div>
<div class="tx" id="t51" style="left:1124.05px;top:32.15px;font-size:14px;line-height:20px;color:#364259;font-weight:700;letter-spacing:0.142px;">Interviews</div>
<div class="row odd" style="top:64.0px"><svg class="abs" style="left:24.5px;top:10px" width="15.5" height="15.5" viewBox="0 0 16 16"><circle cx="8" cy="8" r="7.950" fill="#22c55e"/><rect x="4.400" y="4" width="1.300" height="8.200" rx=".5" fill="#fff"/><path d="M6.300 4.500h5.700l-1.300 2.200 1.300 2.200H6.300z" fill="#fff"/></svg><div class="av20" style="left:45.8px;top:8.8px"><svg width="20.400" height="20.400" viewBox="0 0 20 20"><rect width="20" height="20" fill="#b4663a"/><path d="M0 13l3-2 2 4-3 5H0zM20 12l-3-1-2 5 2 4h3z" fill="#7d8fa3"/><ellipse cx="10" cy="11" rx="5.600" ry="6.800" fill="#c3915f"/><path d="M4.500 15c1.500 3.500 9.500 3.500 11 0-1 4-3 5.500-5.500 5.500S5.500 19 4.500 15z" fill="#5e4330"/><path d="M3.600 8.600C3.200 2.800 7 .4 10 .4s6.800 2.400 6.400 8.200c-1.800-1.600-4-2.200-6.400-2.200s-4.600.6-6.400 2.200z" fill="#e07a2c"/><path d="M3.700 8.800c1.800-2 4-2.600 6.300-2.600s4.500.6 6.300 2.600l-.2-2.400c-1.800-1.400-3.900-1.900-6.100-1.900s-4.300.5-6.100 1.900z" fill="#8b9097"/><path d="M7 10h2M11 10h2" stroke="#3a2a20" stroke-width="1"/></svg></div>
<div class="tx" id="t52" style="left:77.40px;top:8.35px;font-size:14px;line-height:20px;color:#1a1f2b;letter-spacing:-0.069px;">Bowen, James</div>
<div class="tag" style="left:173px;top:9px"></div>
<div class="tx" id="t53" style="left:179.38px;top:8.84px;font-size:12px;line-height:20px;color:#d92b27;letter-spacing:0.048px;">New changes</div>
<div class="tx" id="t54" style="left:506.65px;top:8.35px;font-size:14px;line-height:20px;color:#1a1f2b;letter-spacing:0.303px;">4</div>
<div class="tx" id="t55" style="left:676.05px;top:8.35px;font-size:14px;line-height:20px;color:#1a1f2b;letter-spacing:0.303px;">0</div>
<div class="tx" id="t56" style="left:911.45px;top:8.35px;font-size:14px;line-height:20px;color:#1a1f2b;letter-spacing:0.303px;">7</div>
<div class="tx" id="t57" style="left:1154.95px;top:8.35px;font-size:14px;line-height:20px;color:#1a1f2b;letter-spacing:0.303px;">1</div>
</div>
<div class="row" style="top:102.0px"><svg class="abs" style="left:24.5px;top:10px" width="15.5" height="15.5" viewBox="0 0 16 16"><circle cx="8" cy="8" r="7.950" fill="#22c55e"/><rect x="4.400" y="4" width="1.300" height="8.200" rx=".5" fill="#fff"/><path d="M6.300 4.500h5.700l-1.300 2.200 1.300 2.200H6.300z" fill="#fff"/></svg><div class="av20" style="left:45.8px;top:9px"><svg width="20.400" height="20.400" viewBox="0 0 20 20"><rect width="20" height="20" fill="#e9efe2"/><path d="M3 2l3-2h4l-2 3zM16 3l3 3v5l-2-3z" fill="#8fd040"/><circle cx="9.500" cy="9" r="8.600" fill="#2b1b12"/><path d="M2 10c-1 4 0 7 2 9l3-3zM18 10c1 4 0 6-2 8l-2-3z" fill="#3a2518"/><ellipse cx="11" cy="11.200" rx="4.300" ry="5.600" fill="#a9693f"/><path d="M8 16.500c1.500 1.500 4.500 1.500 6 0l1 3.500H7z" fill="#9a5c36"/><path d="M3 20c1-2.500 3.500-3.200 5.500-3.200L11 19l2.500-2.200c2 0 3.500 1 4.500 3.200z" fill="#f4f4f2"/></svg></div>
<div class="tx" id="t58" style="left:77.40px;top:8.35px;font-size:14px;line-height:20px;color:#1a1f2b;letter-spacing:0.262px;">Boyd, Kristin</div>
<div class="tag" style="left:164px;top:9px"></div>
<div class="tx" id="t59" style="left:170.38px;top:8.84px;font-size:12px;line-height:20px;color:#d92b27;letter-spacing:0.048px;">New changes</div>
<div class="tx" id="t60" style="left:506.65px;top:8.35px;font-size:14px;line-height:20px;color:#1a1f2b;letter-spacing:0.303px;">3</div>
<div class="tx" id="t61" style="left:676.05px;top:8.35px;font-size:14px;line-height:20px;color:#1a1f2b;letter-spacing:0.303px;">0</div>
<div class="tx" id="t62" style="left:911.45px;top:8.35px;font-size:14px;line-height:20px;color:#1a1f2b;letter-spacing:0.303px;">7</div>
<div class="tx" id="t63" style="left:1154.95px;top:8.35px;font-size:14px;line-height:20px;color:#1a1f2b;letter-spacing:0.303px;">0</div>
</div>
<div class="row odd" style="top:140.0px"><svg class="abs" style="left:24.5px;top:10.5px" width="15.5" height="15.5" viewBox="0 0 16 16"><circle cx="8" cy="8" r="7.950" fill="#3b82f6"/><path d="M4.200 7.200A3.900 3.900 0 0 1 11 5.400" fill="none" stroke="#fff" stroke-width="1.600" stroke-linecap="round"/><path d="M12.100 3.200v3.300H8.800z" fill="#fff"/><path d="M11.800 8.800A3.900 3.900 0 0 1 5 10.600" fill="none" stroke="#fff" stroke-width="1.600" stroke-linecap="round"/><path d="M3.900 12.800V9.500h3.300z" fill="#fff"/></svg><div class="av20" style="left:45.8px;top:9.2px"><svg width="20.400" height="20.400" viewBox="0 0 20 20"><rect width="20" height="20" fill="#cfc6bc"/><circle cx="10" cy="8" r="8" fill="#3b2a20"/><ellipse cx="10" cy="12" rx="5" ry="6" fill="#b07a55"/></svg></div>
<div class="tx" id="t64" style="left:77.40px;top:8.35px;font-size:14px;line-height:20px;color:#1a1f2b;letter-spacing:-0.216px;">Chase, Nikki</div>
<div class="tx" id="t65" style="left:506.65px;top:8.35px;font-size:14px;line-height:20px;color:#1a1f2b;letter-spacing:0.303px;">4</div>
<div class="tx" id="t66" style="left:676.05px;top:8.35px;font-size:14px;line-height:20px;color:#1a1f2b;letter-spacing:0.303px;">1</div>
<div class="tx" id="t67" style="left:911.45px;top:8.35px;font-size:14px;line-height:20px;color:#1a1f2b;letter-spacing:0.303px;">6</div>
<div class="tx" id="t68" style="left:1154.95px;top:8.35px;font-size:14px;line-height:20px;color:#1a1f2b;letter-spacing:0.303px;">1</div>
</div>
</div></div>
</body>
</html>
